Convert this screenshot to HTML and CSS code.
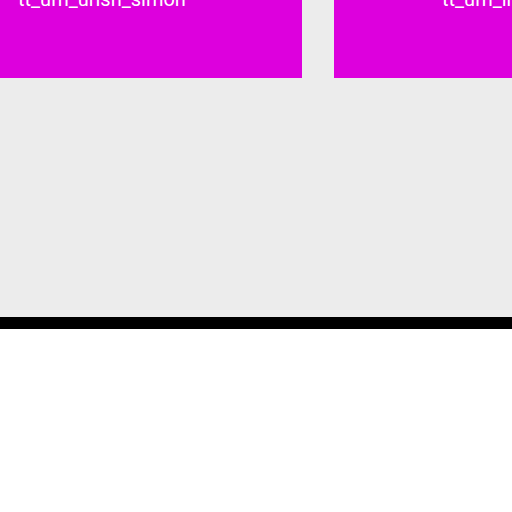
FILE: index.html
```html
<!DOCTYPE html>
<html lang="en">
<head>
  <meta charset="UTF-8">
  <title>Tiles</title>
  <link rel="stylesheet" href="styles.css">
</head>
<body>

<div class="board">
  <div class="tile-row">
    <div class="tile">tt_um_urish_simon</div>
    <div class="tile">tt_um_inverter</div>
  </div>
</div>
<div class="bar"></div>

</body>
</html>
```

FILE: styles.css
```css
body {
  margin: 0;
  background-color: white;
  overflow: hidden;
  font-family: Roboto, 'Noto Sans', sans-serif;
}

.board {
  height: 317px;
  background-color: #ececec;
  overflow: hidden;
}

.tile-row {
  display: flex;
  gap: 32px;
  margin-left: -90px;
  margin-top: -42px;
}

.tile {
  flex: 0 0 392px;
  height: 120px;
  box-sizing: border-box;
  padding: 29px 0 0 108px;
  background-color: #dd00dd;
  color: white;
  font-size: 20px;
  line-height: normal;
  white-space: nowrap;
  overflow: hidden;
}

.bar {
  height: 12px;
  background-color: black;
}
```
